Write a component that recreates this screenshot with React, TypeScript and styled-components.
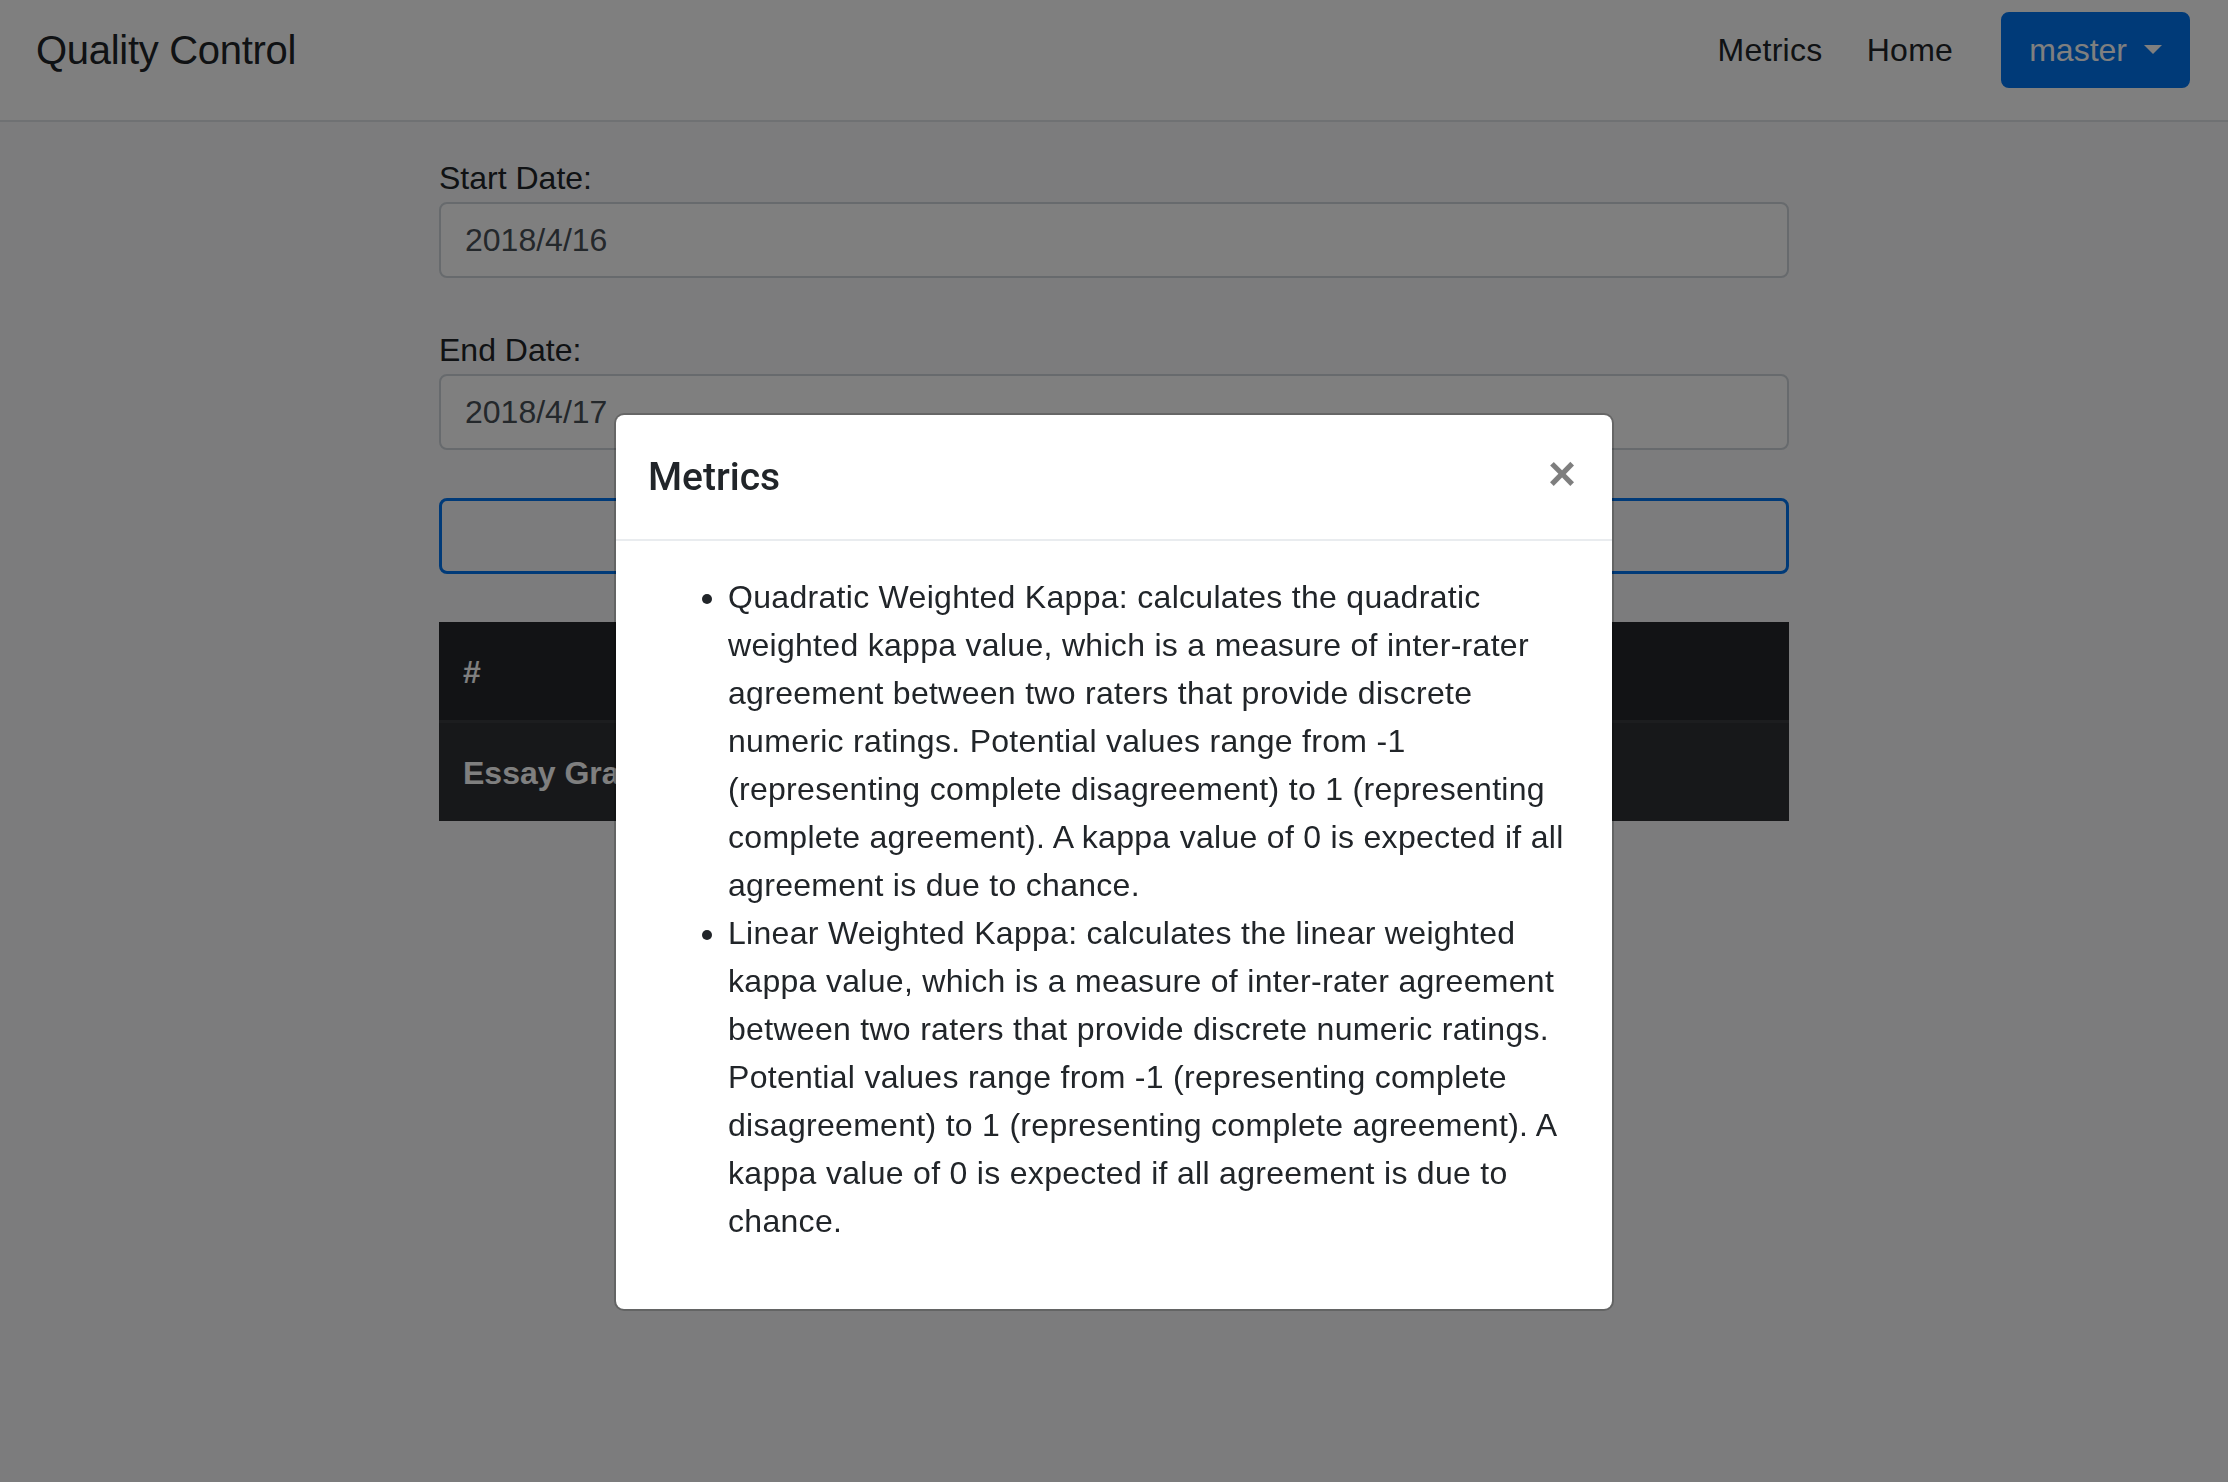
import React from 'react';
import styled, { createGlobalStyle } from 'styled-components';

const GlobalStyle = createGlobalStyle`
  html, body {
    margin: 0;
    padding: 0;
  }
  body {
    font-family: "Liberation Sans", Arial, sans-serif;
    font-size: 32px;
    line-height: 1.5;
    color: #212529;
    background-color: #f8f9fa;
  }
  * {
    box-sizing: border-box;
  }
`;

const Navbar = styled.nav`
  display: flex;
  align-items: center;
  justify-content: space-between;
  height: 122px;
  padding: 12px 38px 32px 36px;
  background-color: #ffffff;
  border-bottom: 2px solid #dee2e6;
`;

const Brand = styled.a`
  font-size: 40px;
  line-height: 60px;
  letter-spacing: -0.3px;
  color: #212529;
  text-decoration: none;
`;

const NavRight = styled.div`
  display: flex;
  align-items: center;
  gap: 48px;
`;

const NavLinks = styled.div`
  display: flex;
  align-items: center;
  gap: 44px;
`;

const NavLink = styled.a`
  font-size: 32px;
  line-height: 48px;
  letter-spacing: 0.3px;
  color: #212529;
  text-decoration: none;
`;

const DropdownButton = styled.button`
  display: inline-flex;
  align-items: center;
  padding: 12px 26px;
  font-family: inherit;
  font-size: 32px;
  line-height: 48px;
  color: #ffffff;
  background-color: #0074f0;
  border: 2px solid #0074f0;
  border-radius: 8px;
`;

const Caret = styled.span`
  display: inline-block;
  width: 0;
  height: 0;
  margin-left: 17px;
  margin-top: -2px;
  border-top: 9px solid #ffffff;
  border-left: 9px solid transparent;
  border-right: 9px solid transparent;
`;

const Main = styled.main`
  width: 1350px;
  margin: 0 auto;
  padding-top: 32px;
  display: flex;
  flex-direction: column;
  gap: 48px;
`;

const Field = styled.div`
  display: flex;
  flex-direction: column;
`;

const Label = styled.label`
  font-size: 32px;
  line-height: 48px;
  color: #212529;
`;

const Input = styled.input`
  width: 100%;
  height: 76px;
  padding: 12px 24px;
  font-family: inherit;
  font-size: 32px;
  line-height: 48px;
  color: #495057;
  background-color: #ffffff;
  border: 2px solid #ced4da;
  border-radius: 8px;
  outline: none;
`;

const OutlineButton = styled.button`
  width: 100%;
  height: 76px;
  background: transparent;
  border: 3px solid #0074f0;
  border-radius: 8px;
`;

const Table = styled.table`
  width: 100%;
  border-collapse: collapse;
  color: #ffffff;
`;

const HeadCell = styled.th`
  padding: 24px;
  text-align: left;
  font-weight: 700;
  line-height: 48px;
  background-color: #25272a;
  border-top: 2px solid #25272a;
`;

const RowCell = styled.th`
  padding: 26px 24px 24px;
  text-align: left;
  font-weight: 700;
  line-height: 48px;
  background-color: #2e3034;
  border-top: 3px solid #383b3f;
`;

const Backdrop = styled.div`
  position: fixed;
  inset: 0;
  background-color: #000000;
  opacity: 0.5;
`;

const ModalLayer = styled.div`
  position: fixed;
  inset: 0;
  display: flex;
  justify-content: center;
  align-items: flex-start;
  padding-top: 413px;
`;

const Dialog = styled.div`
  width: 1000px;
  background-color: #ffffff;
  background-clip: padding-box;
  border: 2px solid rgba(0, 0, 0, 0.2);
  border-radius: 10px;
`;

const ModalHeader = styled.div`
  display: flex;
  align-items: flex-start;
  justify-content: space-between;
  padding: 32px;
  border-bottom: 2px solid #e9ecef;
`;

const ModalTitle = styled.h5`
  margin: 0;
  font-family: Roboto, "Liberation Sans", Arial, sans-serif;
  font-size: 39px;
  font-weight: 500;
  line-height: 60px;
  color: #212529;
`;

const CloseButton = styled.button`
  margin: -29px -28px -32px auto;
  padding: 32px;
  font-family: "Liberation Sans", Arial, sans-serif;
  font-size: 48px;
  font-weight: 700;
  line-height: 1;
  color: #000000;
  text-shadow: 0 2px 0 #ffffff;
  opacity: 0.5;
  background: transparent;
  border: 0;
`;

const ModalBody = styled.div`
  padding: 32px;
`;

const List = styled.ul`
  margin: 0 0 32px;
  padding-left: 80px;
`;

const Item = styled.li`
  font-size: 32px;
  line-height: 48px;
  letter-spacing: 0.3px;
  color: #212529;
`;

const metrics = [
  'Quadratic Weighted Kappa: calculates the quadratic weighted kappa value, which is a measure of inter-rater agreement between two raters that provide discrete numeric ratings. Potential values range from -1 (representing complete disagreement) to 1 (representing complete agreement). A kappa value of 0 is expected if all agreement is due to chance.',
  'Linear Weighted Kappa: calculates the linear weighted kappa value, which is a measure of inter-rater agreement between two raters that provide discrete numeric ratings. Potential values range from -1 (representing complete disagreement) to 1 (representing complete agreement). A kappa value of 0 is expected if all agreement is due to chance.',
];

export default function App() {
  return (
    <>
      <GlobalStyle />
      <Navbar>
        <Brand href="#">Quality Control</Brand>
        <NavRight>
          <NavLinks>
            <NavLink href="#">Metrics</NavLink>
            <NavLink href="#">Home</NavLink>
          </NavLinks>
          <DropdownButton type="button">
            master
            <Caret />
          </DropdownButton>
        </NavRight>
      </Navbar>

      <Main>
        <Field>
          <Label>Start Date:</Label>
          <Input readOnly value="2018/4/16" />
        </Field>
        <Field>
          <Label>End Date:</Label>
          <Input readOnly value="2018/4/17" />
        </Field>
        <OutlineButton type="button" aria-label="Submit" />
        <Table>
          <thead>
            <tr>
              <HeadCell>#</HeadCell>
            </tr>
          </thead>
          <tbody>
            <tr>
              <RowCell>Essay Grading</RowCell>
            </tr>
          </tbody>
        </Table>
      </Main>

      <Backdrop />
      <ModalLayer>
        <Dialog>
          <ModalHeader>
            <ModalTitle>Metrics</ModalTitle>
            <CloseButton type="button" aria-label="Close">×</CloseButton>
          </ModalHeader>
          <ModalBody>
            <List>
              {metrics.map((text) => (
                <Item key={text}>{text}</Item>
              ))}
            </List>
          </ModalBody>
        </Dialog>
      </ModalLayer>
    </>
  );
}
